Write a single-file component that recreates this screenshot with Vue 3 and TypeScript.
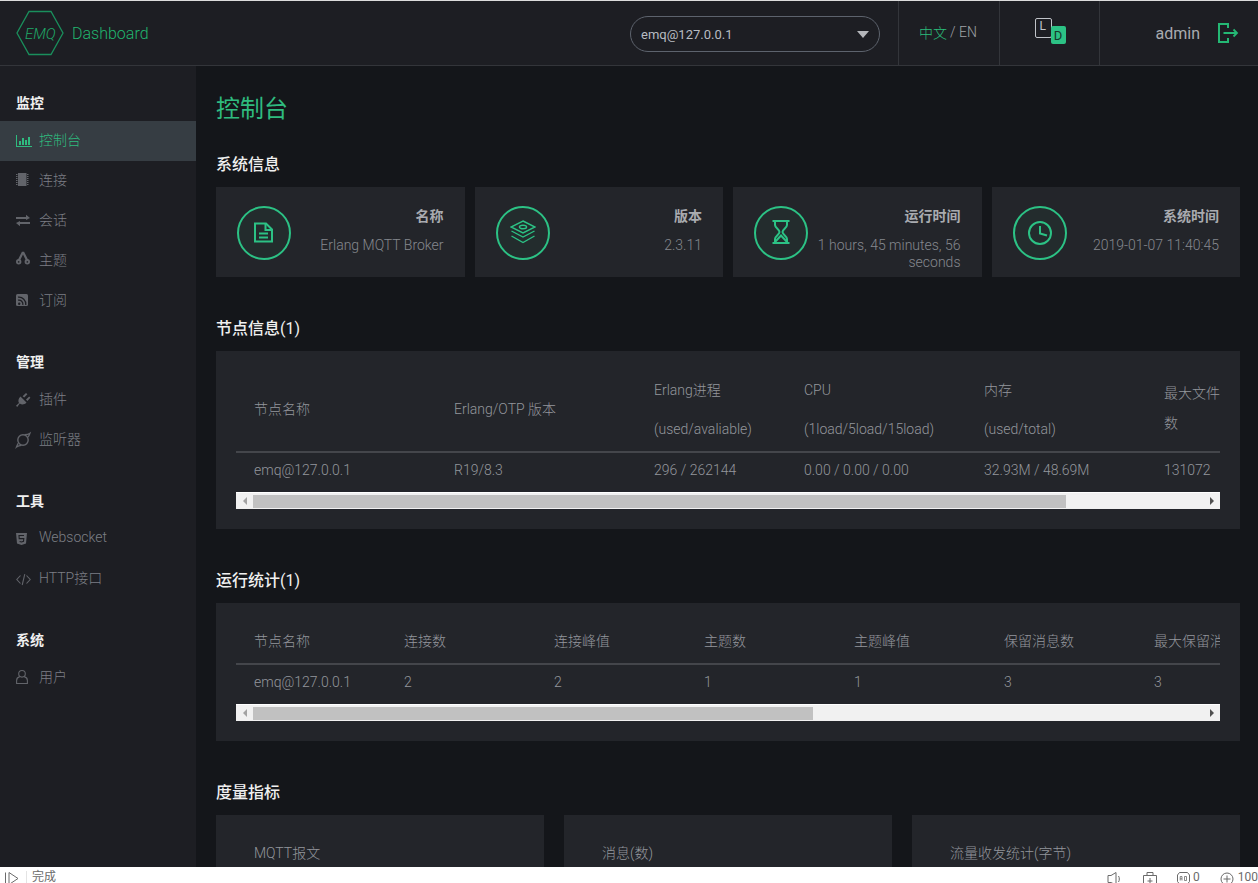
<script setup lang="ts">
interface NavItem { label: string; icon: string; active?: boolean }
interface NavGroup { title: string; items: NavItem[] }

const groups: NavGroup[] = [
  { title: '监控', items: [
    { label: '控制台', icon: 'chart', active: true },
    { label: '连接', icon: 'chip' },
    { label: '会话', icon: 'swap' },
    { label: '主题', icon: 'branch' },
    { label: '订阅', icon: 'rss' },
  ] },
  { title: '管理', items: [
    { label: '插件', icon: 'plug' },
    { label: '监听器', icon: 'orbit' },
  ] },
  { title: '工具', items: [
    { label: 'Websocket', icon: 'html5' },
    { label: 'HTTP接口', icon: 'code' },
  ] },
  { title: '系统', items: [
    { label: '用户', icon: 'user' },
  ] },
]

const infos = [
  { title: '名称', value: 'Erlang MQTT Broker', icon: 'doc' },
  { title: '版本', value: '2.3.11', icon: 'layers' },
  { title: '运行时间', value: '1 hours, 45 minutes, 56 seconds', icon: 'glass' },
  { title: '系统时间', value: '2019-01-07 11:40:45', icon: 'clock' },
]

const nodeCols = [
  { w: 200, head: ['节点名称'], cell: 'emq@127.0.0.1' },
  { w: 200, head: ['Erlang/OTP 版本'], cell: 'R19/8.3' },
  { w: 150, head: ['Erlang进程', '(used/avaliable)'], cell: '296 / 262144' },
  { w: 180, head: ['CPU', '(1load/5load/15load)'], cell: '0.00 / 0.00 / 0.00' },
  { w: 180, head: ['内存', '(used/total)'], cell: '32.93M / 48.69M' },
  { w: 240, head: [], wrap: '最大文件数', cell: '131072' },
]

const statCols = [
  { w: 150, head: '节点名称', cell: 'emq@127.0.0.1' },
  { w: 150, head: '连接数', cell: '2' },
  { w: 150, head: '连接峰值', cell: '2' },
  { w: 150, head: '主题数', cell: '1' },
  { w: 150, head: '主题峰值', cell: '1' },
  { w: 150, head: '保留消息数', cell: '3' },
  { w: 770, head: '最大保留消息数', cell: '3' },
]

const metrics = ['MQTT报文', '消息(数)', '流量收发统计(字节)']
</script>

<template>
  <div class="page">
    <div class="topline"></div>
    <header class="header">
      <div class="logo">
        <svg class="hex" width="50" height="46" viewBox="0 0 50 46">
          <path d="M14 1.5H36L48 23L36 44.5H14L2 23Z" fill="none" stroke="#1a8f5c" stroke-width="1.3" />
        </svg>
        <span class="emq">EMQ</span>
        <span class="brand">Dashboard</span>
      </div>
      <div class="selector">
        <span>emq@127.0.0.1</span>
        <i class="caret"></i>
      </div>
      <div class="cell lang"><em>中文</em> / EN</div>
      <div class="cell theme">
        <div class="ld-wrap">
          <span class="ld-l">L</span>
          <span class="ld-d">D</span>
        </div>
      </div>
      <div class="user-box">
        <span class="admin">admin</span>
        <svg width="22" height="22" viewBox="0 0 22 22" fill="none" stroke="#24b874" stroke-width="2">
          <path d="M11 6V2H2V20H11V16" />
          <path d="M6.5 11H20M16.5 7.5L20 11L16.5 14.5" stroke-width="1.8" />
        </svg>
      </div>
    </header>

    <div class="body">
      <aside class="side">
        <section v-for="g in groups" :key="g.title" class="group">
          <div class="group-title">{{ g.title }}</div>
          <div v-for="it in g.items" :key="it.label" class="nav" :class="{ active: it.active }">
            <svg class="nav-icon" width="16" height="16" viewBox="0 0 16 16">
              <g v-if="it.icon === 'chart'" fill="currentColor">
                <path d="M0 2H1V13H16V14H0Z" /><rect x="3" y="8" width="2" height="4" /><rect x="6" y="5" width="2" height="7" /><rect x="9" y="7" width="2" height="5" /><rect x="12" y="4" width="2" height="8" />
              </g>
              <g v-else-if="it.icon === 'chip'" fill="currentColor">
                <rect x="2" y="0" width="8.5" height="13" />
                <path d="M0 1h1.5v1H0zM0 3h1.5v1H0zM0 5h1.5v1H0zM0 7h1.5v1H0zM0 9h1.5v1H0zM0 11h1.5v1H0zM11 1h1.5v1H11zM11 3h1.5v1H11zM11 5h1.5v1H11zM11 7h1.5v1H11zM11 9h1.5v1H11zM11 11h1.5v1H11z" />
              </g>
              <g v-else-if="it.icon === 'swap'" fill="currentColor">
                <path d="M0 4H10V1.8L14 5L10 7V6H0Z" /><path d="M14 9H4V8L0 10L4 13.2V11H14Z" />
              </g>
              <g v-else-if="it.icon === 'branch'" fill="none" stroke="currentColor" stroke-width="1.8">
                <path d="M7 -1L2.5 8M7 -1L11.5 8" stroke-width="2.2" /><circle cx="2.7" cy="8.8" r="1.8" /><circle cx="11.3" cy="8.8" r="1.8" />
              </g>
              <g v-else-if="it.icon === 'rss'">
                <rect x="0" y="1" width="12" height="12" rx="1.5" fill="currentColor" />
                <path d="M2 4.2A7 7 0 0 1 9.8 12M2 7.2A4 4 0 0 1 6.8 12" fill="none" stroke="#1d1e23" stroke-width="1.3" />
                <circle cx="3.2" cy="10.8" r="1.2" fill="#1d1e23" />
              </g>
              <g v-else-if="it.icon === 'plug'" fill="currentColor">
                <path d="M4.5 4.5L10.5 10.5C8.5 12.8 5.6 13 3.8 11.6L1.2 15L0 13.8L3 11C1.8 9 2.4 6.4 4.5 4.5Z" />
                <path d="M6.6 4.2L10 1L11.4 2.2L8.2 5.6ZM10 7.6L13.2 4.4L14.4 5.8L11.4 9Z" />
              </g>
              <g v-else-if="it.icon === 'orbit'" fill="none" stroke="currentColor" stroke-width="1.4">
                <circle cx="7" cy="8" r="5.2" /><path d="M8.5 2.7C10.5 2.7 12.5 2.4 14 1.2C13.5 3 13 4 12 5M5.5 13.3C3.5 13.3 2 13.8 0.5 15C1 13.5 1.5 12.5 2.2 11.2" stroke-width="1.3" />
              </g>
              <g v-else-if="it.icon === 'html5'">
                <path d="M0 2H11L10 12.5L5.5 14L1 12.5Z" fill="currentColor" />
                <path d="M8 4.5H3L3.2 7.6H7.8L7.5 10.4L5.5 11L3.6 10.4" fill="none" stroke="#1d1e23" stroke-width="1.1" />
              </g>
              <g v-else-if="it.icon === 'code'" fill="none" stroke="currentColor" stroke-width="1.1">
                <path d="M4.5 4.5L0.8 8.5L4.5 12.5M10.5 4.5L14.2 8.5L10.5 12.5M8.8 3.2L6.2 14" />
              </g>
              <g v-else fill="none" stroke="currentColor" stroke-width="1.1">
                <circle cx="6" cy="3.8" r="3.3" /><path d="M3.8 6.6C1.6 7.2 0.6 8.6 0.6 10.5V13.5H11.4V10.5C11.4 8.6 10.4 7.2 8.2 6.6" />
              </g>
            </svg>
            <span class="nav-label">{{ it.label }}</span>
          </div>
        </section>
      </aside>

      <main class="main">
        <h1 class="title">控制台</h1>

        <h3 class="heading">系统信息</h3>
        <div class="infos">
          <div v-for="c in infos" :key="c.title" class="info">
            <div class="ring">
              <svg width="26" height="26" viewBox="0 0 26 26" fill="none" stroke="#2cc285" stroke-width="2">
                <g v-if="c.icon === 'doc'">
                  <path d="M4 3.5H15L21 9.5V21.5H4Z" /><path d="M14.5 3.5V10H21M8 13.5H17M8 17.5H17" />
                </g>
                <g v-else-if="c.icon === 'layers'" stroke-width="1.4">
                  <path d="M13 1L25 7L13 13L1 7Z" /><ellipse cx="13" cy="7" rx="3.6" ry="1.8" /><path d="M1.5 11L13 17L24.5 11M1.5 16L13 22.5L24.5 16" />
                </g>
                <g v-else-if="c.icon === 'glass'">
                  <path d="M4.5 1H21.5M4.5 23H21.5M7 1V5C7 8 11.5 9.5 11.5 12C11.5 14.5 7 16 7 19V23M19 1V5C19 8 14.5 9.5 14.5 12C14.5 14.5 19 16 19 19V23" />
                  <path d="M7 22L13 15.5L19 22" fill="none" />
                </g>
                <g v-else>
                  <circle cx="13" cy="13" r="11" /><path d="M13 6V13.5L20 15.5" />
                </g>
              </svg>
            </div>
            <div class="info-text">
              <div class="info-title">{{ c.title }}</div>
              <div class="info-value">{{ c.value }}</div>
            </div>
          </div>
        </div>

        <h3 class="heading gap">节点信息<span class="count">(1)</span></h3>
        <div class="panel">
          <div class="clip">
            <table class="table node">
              <colgroup><col v-for="c in nodeCols" :key="c.cell" :style="{ width: c.w + 'px' }" /></colgroup>
              <thead>
                <tr>
                  <th v-for="c in nodeCols" :key="c.cell">
                    <template v-if="c.wrap"><span class="wrap-head">{{ c.wrap }}</span></template>
                    <template v-else-if="c.head.length === 1">{{ c.head[0] }}</template>
                    <div v-else class="two">
                      <span>{{ c.head[0] }}</span><span>{{ c.head[1] }}</span>
                    </div>
                  </th>
                </tr>
              </thead>
              <tbody>
                <tr><td v-for="c in nodeCols" :key="c.cell">{{ c.cell }}</td></tr>
              </tbody>
            </table>
          </div>
          <div class="scrollbar">
            <i class="arrow left"></i>
            <div class="track"><div class="thumb" style="width: 85.6%"></div></div>
            <i class="arrow right"></i>
          </div>
        </div>

        <h3 class="heading gap">运行统计<span class="count">(1)</span></h3>
        <div class="panel">
          <div class="clip">
            <table class="table stat">
              <colgroup><col v-for="c in statCols" :key="c.head" :style="{ width: c.w + 'px' }" /></colgroup>
              <thead>
                <tr><th v-for="c in statCols" :key="c.head">{{ c.head }}</th></tr>
              </thead>
              <tbody>
                <tr><td v-for="c in statCols" :key="c.head">{{ c.cell }}</td></tr>
              </tbody>
            </table>
          </div>
          <div class="scrollbar">
            <i class="arrow left"></i>
            <div class="track"><div class="thumb" style="width: 58.9%"></div></div>
            <i class="arrow right"></i>
          </div>
        </div>

        <h3 class="heading gap">度量指标</h3>
        <div class="metrics">
          <div v-for="m in metrics" :key="m" class="metric">{{ m }}</div>
        </div>
      </main>
    </div>

    <footer class="status">
      <div class="status-left">
        <svg width="16" height="14" viewBox="0 0 16 14" fill="none" stroke="#6b6b6b">
          <path d="M1.5 0.5V12M5 0.5L14 6.5L5 12.5Z" />
        </svg>
        <span class="status-sep"></span>
        <span>完成</span>
      </div>
      <div class="status-right">
        <span class="si">
          <svg width="16" height="14" viewBox="0 0 16 14" fill="none" stroke="#6b6b6b">
            <path d="M1 3.5H4L9 0.5V13L4 10.5H1ZM11.5 4C12.6 5.5 12.6 8.5 11.5 10" />
          </svg>
        </span>
        <span class="si">
          <svg width="14" height="14" viewBox="0 0 14 14" fill="none" stroke="#6b6b6b">
            <path d="M0.5 3.5H13.5V14M0.5 3.5V14M4 3.5V0.5H10V3.5M7 6V12M4.5 9H9.5" />
          </svg>
        </span>
        <span class="si tight">
          <svg width="13" height="14" viewBox="0 0 13 14" fill="none" stroke="#6b6b6b">
            <path d="M2.5 0.5H10.5L12.5 3V9.5L10.5 12H2.5L0.5 9.5V3Z" /><path d="M3.2 8.5V4.5H5V8.5M3.2 6.8H5M7.5 4.5H9.5V8.5H7.5Z" stroke-width="0.8" />
          </svg>
          <span>0</span>
        </span>
        <span class="si">
          <svg width="14" height="14" viewBox="0 0 14 14" fill="none" stroke="#6b6b6b">
            <circle cx="7" cy="7" r="6" /><path d="M7 3.5V10.5M3.5 7H10.5" />
          </svg>
          <span>100</span>
        </span>
      </div>
    </footer>
  </div>
</template>

<style>
html, body { margin: 0; height: 100%; overflow: hidden; }
</style>

<style scoped>
.page {
  height: 883px;
  display: flex;
  flex-direction: column;
  overflow: hidden;
  font-family: Roboto, "Noto Sans CJK SC", sans-serif;
  font-size: 14px;
  background: #14161a;
  color: #85888e;
}
.topline { height: 1px; background: #dcdcdc; flex: none; }
.header {
  flex: none;
  height: 65px;
  box-sizing: border-box;
  border-bottom: 1px solid #33353a;
  background: #1d1e23;
  display: flex;
  align-items: stretch;
}
.logo {
  position: relative;
  width: 630px;
  display: flex;
  align-items: center;
  padding-left: 15px;
  box-sizing: border-box;
}
.emq {
  position: absolute;
  left: 25px;
  top: 23px;
  font-style: italic;
  font-size: 15px;
  font-weight: 300;
  line-height: 20px;
  color: #1fa868;
}
.brand { margin-left: 7px; font-size: 16px; font-weight: 300; color: #21b56f; }
.selector {
  width: 250px;
  height: 36px;
  margin-top: 15px;
  box-sizing: border-box;
  border: 1px solid #5d636d;
  border-radius: 18px;
  padding: 0 10px;
  display: flex;
  align-items: center;
  justify-content: space-between;
  font-size: 13px;
  color: #b8bcc2;
  background: #1d1e23;
}
.caret {
  width: 0;
  height: 0;
  border-left: 6px solid transparent;
  border-right: 6px solid transparent;
  border-top: 7px solid #b4b6ba;
}
.cell {
  display: flex;
  align-items: center;
  justify-content: center;
  border-left: 1px solid #33353a;
  box-sizing: border-box;
}
.lang {
  margin-left: 18px;
  width: 101px;
  font-size: 14px;
  font-weight: 300;
  color: #a0a3a8;
  padding: 0 2px 2px 0;
}
.lang em { font-style: normal; color: #2bbf7c; margin-right: 3px; }
.theme { width: 100px; }
.ld-wrap {
  position: relative;
  width: 32px;
  height: 26px;
  margin-top: -5px;
  margin-left: 2px;
}
.ld-l {
  position: absolute;
  left: 0;
  top: 0;
  width: 17px;
  height: 20px;
  box-sizing: border-box;
  border: 1px solid #c0c3c8;
  border-radius: 2px;
  font-size: 12px;
  line-height: 14px;
  padding-left: 4px;
  color: #c0c3c8;
}
.ld-d {
  position: absolute;
  left: 16px;
  top: 8px;
  width: 15px;
  height: 18px;
  background: #2cc285;
  border-radius: 2px;
  font-size: 13px;
  line-height: 19px;
  text-align: center;
  color: #17392c;
}
.user-box {
  flex: 1;
  border-left: 1px solid #33353a;
  display: flex;
  align-items: center;
  justify-content: flex-end;
  padding-right: 19px;
  gap: 17px;
}
.admin { font-size: 16px; color: #a9abb0; }

.body { flex: 1; min-height: 0; display: flex; overflow: hidden; }
.side {
  flex: none;
  width: 196px;
  background: #1d1e23;
  padding-top: 19px;
  box-sizing: border-box;
}
.group { margin-bottom: 23px; }
.group-title {
  height: 36px;
  line-height: 36px;
  padding-left: 16px;
  font-size: 14px;
  font-weight: 700;
  color: #f0f0f0;
}
.nav {
  height: 40px;
  display: flex;
  align-items: center;
  padding-left: 16px;
  color: #62646a;
}
.nav.active { background: #363d43; color: #2fbb7f; }
.nav-icon { flex: none; margin-right: 7px; overflow: visible; }
.nav-label { color: #7c7f85; font-size: 14px; font-weight: 300; padding-bottom: 5px; }
.nav.active .nav-label { color: #2fbb7f; }

.main {
  flex: 1;
  min-width: 0;
  padding: 26px 18px 0 20px;
  overflow: hidden;
  background: #14161a;
}
.title {
  margin: 0 0 27px;
  font-size: 24px;
  line-height: 34px;
  font-weight: 400;
  color: #2fbb7f;
}
.heading {
  margin: 0 0 10px;
  font-size: 16px;
  line-height: 24px;
  font-weight: 500;
  color: #f0f0f0;
}
.heading.gap { margin-top: 40px; }
.count { font-weight: 400; }
.infos {
  display: grid;
  grid-template-columns: repeat(4, 1fr);
  gap: 10px;
}
.info {
  height: 90px;
  box-sizing: border-box;
  background: #23252a;
  padding: 19px 21px 0 21px;
  display: flex;
  align-items: flex-start;
  gap: 4px;
}
.ring {
  flex: none;
  width: 54px;
  height: 54px;
  box-sizing: border-box;
  border: 2px solid #2cc285;
  border-radius: 50%;
  background: #232c2d;
  display: flex;
  align-items: center;
  justify-content: center;
}
.info-text { flex: 1; min-width: 0; text-align: right; }
.info-title {
  font-weight: 700;
  font-size: 14px;
  line-height: 20px;
  color: #a9abb0;
}
.info-value {
  margin-top: 11px;
  font-size: 14px;
  font-weight: 300;
  line-height: 17px;
  color: #85888e;
}
.panel {
  background: #23252a;
  padding: 20px;
}
.clip { overflow: hidden; }
.table {
  table-layout: fixed;
  border-collapse: collapse;
  font-size: 14px;
  font-weight: 300;
}
.table.node { width: 1150px; }
.table.stat { width: 1670px; }
.table th {
  padding: 0 18px 6px;
  font-weight: 300;
  text-align: left;
  color: #93969c;
  border-bottom: 2px solid #44464b;
  box-sizing: border-box;
  vertical-align: middle;
}
.table td {
  padding: 0 18px 3px;
  height: 38px;
  color: #93969c;
  box-sizing: border-box;
  white-space: nowrap;
}
.table.node th { height: 81px; }
.table.stat th { height: 41px; white-space: nowrap; overflow: hidden; }
.two { display: flex; flex-direction: column; gap: 19px; line-height: 20px; padding-top: 3px; }
.wrap-head { display: block; width: 60px; line-height: 30px; }
.scrollbar {
  height: 17px;
  margin-top: 2px;
  background: #f1f1f1;
  border-top: 1px solid #fff;
  box-sizing: border-box;
  display: flex;
  align-items: center;
}
.arrow {
  flex: none;
  width: 17px;
  height: 16px;
  display: flex;
  align-items: center;
  justify-content: center;
}
.arrow::before {
  content: "";
  width: 0;
  height: 0;
  border-top: 4px solid transparent;
  border-bottom: 4px solid transparent;
}
.arrow.left::before { border-right: 4px solid #a3a3a3; }
.arrow.right::before { border-left: 4px solid #505050; }
.track { flex: 1; height: 13px; margin-top: 1px; }
.thumb { height: 100%; background: #c1c1c1; }
.metrics {
  display: grid;
  grid-template-columns: repeat(3, 1fr);
  gap: 20px;
}
.metric {
  height: 120px;
  background: #23252a;
  padding: 28px 38px;
  box-sizing: border-box;
  line-height: 20px;
  font-weight: 300;
  color: #93969c;
}
.status {
  flex: none;
  height: 16px;
  box-sizing: border-box;
  padding-top: 4px;
  background: #fff;
  color: #6b6b6b;
  font-size: 12px;
  line-height: 12px;
  display: flex;
  justify-content: space-between;
  align-items: flex-start;
  overflow: hidden;
}
.status svg { flex: none; margin-top: 1px; }
.status-left { display: flex; align-items: flex-start; padding-left: 4px; }
.status-sep { width: 1px; height: 12px; background: #e4e4e4; margin: 0 5px 0 6px; }
.status-right { display: flex; align-items: flex-start; gap: 20px; white-space: nowrap; }
.si { display: flex; align-items: flex-start; gap: 4px; }
.si.tight { gap: 3px; }
</style>
